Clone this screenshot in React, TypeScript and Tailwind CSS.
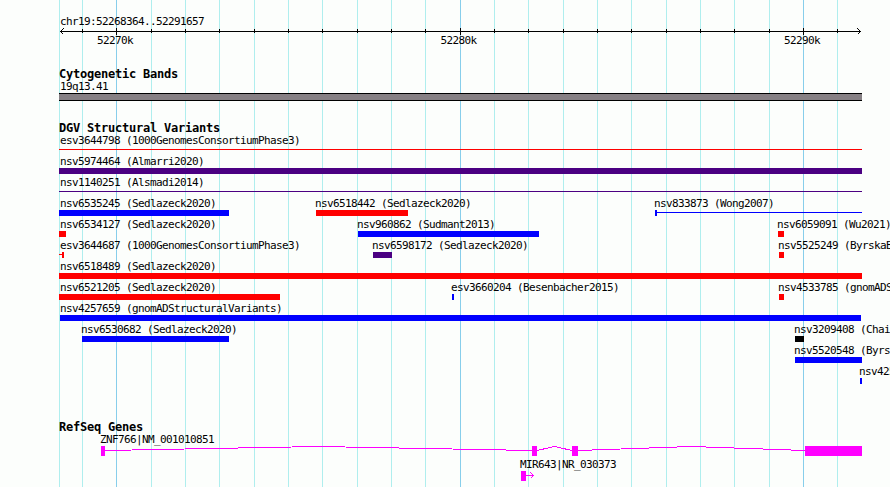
import type { ReactNode } from 'react'

interface Feature {
  name:  string
  start: number
  end:   number
  color: string
  shape?: 'line' | 'capLeft' | 'capRight'
}

const RED = '#ff0000'
const BLUE = '#0000ff'
const INDIGO = '#4b0082'
const MAGENTA = '#ff00ff'

const MINOR = [82, 151, 185, 219, 254, 288, 322, 357, 391, 425, 494, 528, 563, 597, 631, 666, 700, 734, 769, 837]
const MAJOR = [
  { x: 116, text: '52270k' },
  { x: 460, text: '52280k' },
  { x: 803, text: '52290k' },
]

const ROWS: Feature[][] = [
  [{ name: 'esv3644798 (1000GenomesConsortiumPhase3)', start: 59, end: 862, color: RED, shape: 'line' }],
  [{ name: 'nsv5974464 (Almarri2020)', start: 59, end: 862, color: INDIGO }],
  [{ name: 'nsv1140251 (Alsmadi2014)', start: 59, end: 862, color: INDIGO, shape: 'line' }],
  [
    { name: 'nsv6535245 (Sedlazeck2020)', start: 59, end: 229, color: BLUE },
    { name: 'nsv6518442 (Sedlazeck2020)', start: 316, end: 408, color: RED },
    { name: 'nsv833873 (Wong2007)', start: 655, end: 862, color: BLUE, shape: 'capLeft' },
  ],
  [
    { name: 'nsv6534127 (Sedlazeck2020)', start: 59, end: 66, color: RED },
    { name: 'nsv960862 (Sudmant2013)', start: 358, end: 539, color: BLUE },
    { name: 'nsv6059091 (Wu2021)', start: 778, end: 784, color: RED },
  ],
  [
    { name: 'esv3644687 (1000GenomesConsortiumPhase3)', start: 59, end: 64, color: RED, shape: 'capRight' },
    { name: 'nsv6598172 (Sedlazeck2020)', start: 373, end: 392, color: INDIGO },
    { name: 'nsv5525249 (ByrskaBishop2022)', start: 779, end: 784, color: RED },
  ],
  [{ name: 'nsv6518489 (Sedlazeck2020)', start: 59, end: 862, color: RED }],
  [
    { name: 'nsv6521205 (Sedlazeck2020)', start: 59, end: 280, color: RED },
    { name: 'esv3660204 (Besenbacher2015)', start: 452, end: 454, color: BLUE },
    { name: 'nsv4533785 (gnomADStructuralVariants)', start: 779, end: 784, color: RED },
  ],
  [{ name: 'nsv4257659 (gnomADStructuralVariants)', start: 60, end: 861, color: BLUE }],
  [
    { name: 'nsv6530682 (Sedlazeck2020)', start: 82, end: 229, color: BLUE },
    { name: 'nsv3209408 (Chaisson2019)', start: 795, end: 804, color: '#000000' },
  ],
  [{ name: 'nsv5520548 (ByrskaBishop2022)', start: 795, end: 862, color: BLUE }],
  [{ name: 'nsv4257660', start: 860, end: 862, color: BLUE }],
]

function Heading({ children }: { children: ReactNode }) {
  return (
    <h2 className="h-3 pl-[59px] text-[12px] leading-[10px] font-bold tracking-[-0.22px]">
      {children}
    </h2>
  )
}

// One variant on the genome axis: label on top, span glyph below
function Variant({ f }: { f: Feature }) {
  const width = f.end - f.start
  // labels never start left of the panel
  const indent = Math.max(60, f.start - 1) - f.start

  return (
    <div className="absolute flex flex-col" style={{ left: f.start }}>
      <span className="h-3" style={{ marginLeft: indent }}>{f.name}</span>
      {f.shape ? (
        <div className={`flex h-1.5 ${f.shape === 'capRight' ? 'flex-row-reverse' : ''}`} style={{ width }}>
          {f.shape !== 'line' && <div className="w-0.5 shrink-0" style={{ background: f.color }} />}
          <div className="mt-0.5 h-px grow" style={{ background: f.color }} />
        </div>
      ) : (
        <div className="h-1.5" style={{ width, background: f.color }} />
      )}
    </div>
  )
}

function Gridlines() {
  return (
    <svg className="absolute inset-0" width="890" height="487" shapeRendering="crispEdges">
      {[59, ...MINOR].map(x => <rect key={x} x={x} width="1" height="487" fill="#afeeee" />)}
      {MAJOR.map(m => <rect key={m.x} x={m.x} width="1" height="487" fill="#87ceeb" />)}
    </svg>
  )
}

function Ruler() {
  return (
    <section className="pt-4">
      <div className="h-3 pl-[60px]">chr19:52268364..52291657</div>
      <svg className="block" width="890" height="7" shapeRendering="crispEdges">
        <rect x="60" y="3" width="801" height="1" />
        {MINOR.map(x => <rect key={x} x={x} y="1" width="1" height="4" />)}
        {MAJOR.map(m => <rect key={m.x} x={m.x} y="0" width="1" height="7" />)}
        <path d="M63.5 .5 60.5 3.5 63.5 6.5M857.5 .5 860.5 3.5 857.5 6.5" fill="none" stroke="#000" />
      </svg>
      <div className="box-content flex h-3 w-[723px] justify-between pl-[97px]">
        {MAJOR.map(m => <span key={m.x} className="w-9">{m.text}</span>)}
      </div>
    </section>
  )
}

export default function App() {
  return (
    <main className="relative h-[487px] w-[890px] overflow-hidden bg-[#fcfefc] text-black">
      <Gridlines />
      <div className="relative flex flex-col gap-[22px] whitespace-nowrap text-[11px] leading-3 tracking-[-0.62px] font-['DejaVu_Sans_Mono','Liberation_Mono',monospace]">
        <Ruler />

        <section>
          <Heading>Cytogenetic Bands</Heading>
          <div className="h-3 pl-[60px]">19q13.41</div>
          <div className="ml-[59px] h-2 w-[803px] border-y border-black bg-[#868084]" />
        </section>

        <section className="pb-[13px]">
          <Heading>DGV Structural Variants</Heading>
          {ROWS.map((row, i) => (
            <div key={i} className="relative h-[21px]">
              {row.map(f => <Variant key={f.name} f={f} />)}
            </div>
          ))}
        </section>

        <section>
          <Heading>RefSeq Genes</Heading>
          <div className="h-[25px]">
            <div className="h-3 pl-[100px]">ZNF766|NM_001010851</div>
            <svg className="block" width="890" height="10" fill={MAGENTA} shapeRendering="crispEdges">
              {/* introns */}
              <path
                d="M105 4.5 318.5 .5 532 4.5M537 4.5 554.5 .5 572 4.5M578 4.5 691.5 .5 805 4.5"
                fill="none"
                stroke={MAGENTA}
              />
              {/* exons */}
              <rect x="101" width="4" height="10" />
              <rect x="532" width="5" height="10" />
              <rect x="572" width="6" height="10" />
              <rect x="805" width="57" height="10" />
            </svg>
          </div>
          <div className="h-[25px]">
            <div className="h-3 pl-[520px]">MIR643|NR_030373</div>
            <svg className="block" width="890" height="10" fill={MAGENTA} shapeRendering="crispEdges">
              <rect x="521" width="5" height="10" />
              <path d="M526 4.5H533M530.5 1.5 533.5 4.5 530.5 7.5" fill="none" stroke={MAGENTA} />
            </svg>
          </div>
        </section>
      </div>
    </main>
  )
}
